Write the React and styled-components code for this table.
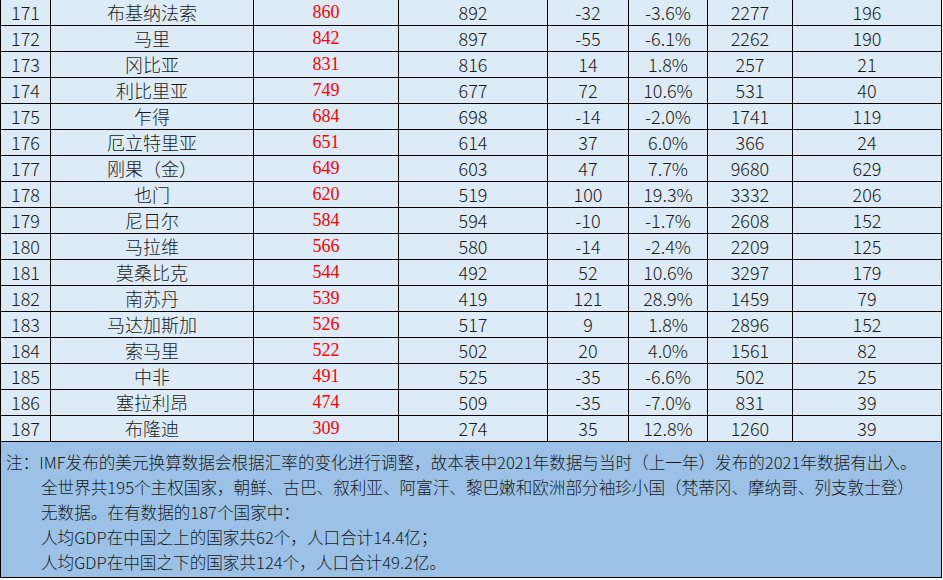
import React from "react";
import styled, { createGlobalStyle } from "styled-components";

const Global = createGlobalStyle`
  html, body { margin: 0; padding: 0; background: #ffffff; }
  body { font-family: "Noto Sans CJK SC", "Noto Sans", sans-serif; }
`;

const Sheet = styled.div`
  width: 942px;
  box-sizing: border-box;
  border-left: 1px solid #000;
  border-right: 1px solid #000;
  border-bottom: 1px solid #000;
`;

const Row = styled.div`
  display: grid;
  grid-template-columns: 50px 203px 145px 149px 81px 79px 85px 148px;
  height: 26px;
  box-sizing: border-box;
  border-bottom: 1px solid #000;
  background: #ddebf7;
`;

const Cell = styled.div`
  box-sizing: border-box;
  border-right: ${(p) => (p.$last ? "none" : "1px solid #000")};
  display: flex;
  align-items: center;
  justify-content: center;
  font-family: ${(p) =>
    p.$red
      ? '"Liberation Serif", "Noto Sans CJK SC", serif'
      : '"Noto Sans CJK SC", "Noto Sans", sans-serif'};
  font-weight: ${(p) => (p.$red ? 400 : 300)};
  font-size: 18px;
  line-height: 25px;
  color: ${(p) => (p.$red ? "#ff0000" : "#1a1a1a")};
  white-space: nowrap;
  overflow: hidden;
`;

const Notes = styled.div`
  background: #9bc2e6;
  height: 135px;
  box-sizing: border-box;
  padding: 8px 0 0 5px;
  font-family: "Noto Sans CJK SC", "Noto Sans", sans-serif;
  font-size: 16.6px;
  line-height: 25px;
  color: #1a1a1a;
  font-weight: 300;
`;

const NoteLine = styled.div`
  white-space: nowrap;
  padding-left: ${(p) => (p.$indent ? "35px" : "0")};
`;

const rows = [
  ["171", "布基纳法索", "860", "892", "-32", "-3.6%", "2277", "196"],
  ["172", "马里", "842", "897", "-55", "-6.1%", "2262", "190"],
  ["173", "冈比亚", "831", "816", "14", "1.8%", "257", "21"],
  ["174", "利比里亚", "749", "677", "72", "10.6%", "531", "40"],
  ["175", "乍得", "684", "698", "-14", "-2.0%", "1741", "119"],
  ["176", "厄立特里亚", "651", "614", "37", "6.0%", "366", "24"],
  ["177", "刚果（金）", "649", "603", "47", "7.7%", "9680", "629"],
  ["178", "也门", "620", "519", "100", "19.3%", "3332", "206"],
  ["179", "尼日尔", "584", "594", "-10", "-1.7%", "2608", "152"],
  ["180", "马拉维", "566", "580", "-14", "-2.4%", "2209", "125"],
  ["181", "莫桑比克", "544", "492", "52", "10.6%", "3297", "179"],
  ["182", "南苏丹", "539", "419", "121", "28.9%", "1459", "79"],
  ["183", "马达加斯加", "526", "517", "9", "1.8%", "2896", "152"],
  ["184", "索马里", "522", "502", "20", "4.0%", "1561", "82"],
  ["185", "中非", "491", "525", "-35", "-6.6%", "502", "25"],
  ["186", "塞拉利昂", "474", "509", "-35", "-7.0%", "831", "39"],
  ["187", "布隆迪", "309", "274", "35", "12.8%", "1260", "39"],
];

export default function App() {
  return (
    <>
      <Global />
      <Sheet>
        {rows.map((r) => (
          <Row key={r[0]}>
            {r.map((v, i) => (
              <Cell key={i} $red={i === 2} $last={i === 7}>
                {v}
              </Cell>
            ))}
          </Row>
        ))}
        <Notes>
          <NoteLine>
            注：IMF发布的美元换算数据会根据汇率的变化进行调整，故本表中2021年数据与当时（上一年）发布的2021年数据有出入。
          </NoteLine>
          <NoteLine $indent>
            全世界共195个主权国家，朝鲜、古巴、叙利亚、阿富汗、黎巴嫩和欧洲部分袖珍小国（梵蒂冈、摩纳哥、列支敦士登）
          </NoteLine>
          <NoteLine $indent>无数据。在有数据的187个国家中：</NoteLine>
          <NoteLine $indent>人均GDP在中国之上的国家共62个，人口合计14.4亿；</NoteLine>
          <NoteLine $indent>人均GDP在中国之下的国家共124个，人口合计49.2亿。</NoteLine>
        </Notes>
      </Sheet>
    </>
  );
}
